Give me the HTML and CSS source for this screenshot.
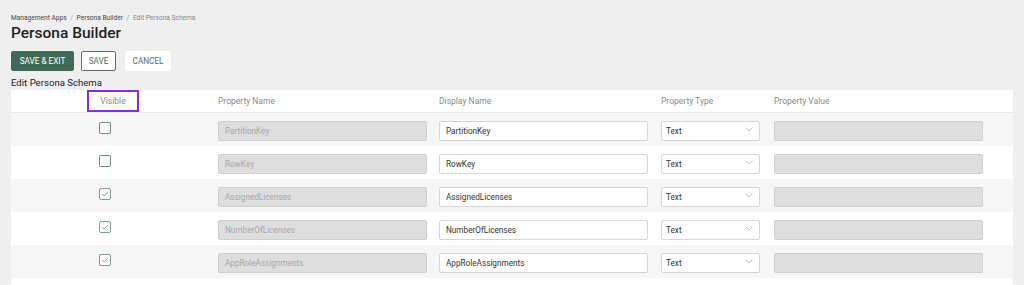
FILE: index.html
```html
<!DOCTYPE html>
<html lang="en">
<head>
    <meta charset="UTF-8">
    <meta name="viewport" content="width=device-width, initial-scale=1.0">
    <title>Persona Builder</title>
    <link rel="stylesheet" href="styles.css">
</head>
<body>
    <div class="page">
        <nav class="breadcrumb">
            <a href="#">Management Apps</a>
            <span class="sep">/</span>
            <a href="#">Persona Builder</a>
            <span class="sep">/</span>
            <span class="current">Edit Persona Schema</span>
        </nav>

        <h1>Persona Builder</h1>

        <div class="actions">
            <button class="btn btn-primary">Save &amp; Exit</button>
            <button class="btn btn-outline">Save</button>
            <button class="btn btn-plain">Cancel</button>
        </div>

        <h2 class="section-title">Edit Persona Schema</h2>

        <div class="schema-table">
            <!-- Header -->
            <div class="schema-row schema-head">
                <div class="cell cell-visible"><span class="visible-label">Visible</span></div>
                <div class="cell">Property Name</div>
                <div class="cell">Display Name</div>
                <div class="cell">Property Type</div>
                <div class="cell">Property Value</div>
            </div>

            <div class="schema-row">
                <div class="cell cell-visible"><span class="checkbox"></span></div>
                <div class="cell"><input class="field" type="text" value="PartitionKey" disabled></div>
                <div class="cell"><input class="field" type="text" value="PartitionKey"></div>
                <div class="cell">
                    <div class="select-wrap">
                        <select class="field select"><option>Text</option></select>
                        <svg class="chevron" width="8" height="5" viewBox="0 0 8 5"><path d="M0.5 0.5 L4 4 L7.5 0.5" fill="none" stroke="#c4c4c4" stroke-width="1"/></svg>
                    </div>
                </div>
                <div class="cell"><input class="field" type="text" value="" disabled></div>
            </div>

            <div class="schema-row">
                <div class="cell cell-visible"><span class="checkbox"></span></div>
                <div class="cell"><input class="field" type="text" value="RowKey" disabled></div>
                <div class="cell"><input class="field" type="text" value="RowKey"></div>
                <div class="cell">
                    <div class="select-wrap">
                        <select class="field select"><option>Text</option></select>
                        <svg class="chevron" width="8" height="5" viewBox="0 0 8 5"><path d="M0.5 0.5 L4 4 L7.5 0.5" fill="none" stroke="#c4c4c4" stroke-width="1"/></svg>
                    </div>
                </div>
                <div class="cell"><input class="field" type="text" value="" disabled></div>
            </div>

            <div class="schema-row">
                <div class="cell cell-visible">
                    <span class="checkbox checked"><svg width="8" height="6" viewBox="0 0 8 6"><path d="M1 3 L3 5 L7 1" fill="none" stroke="#86a899" stroke-width="1"/></svg></span>
                </div>
                <div class="cell"><input class="field" type="text" value="AssignedLicenses" disabled></div>
                <div class="cell"><input class="field" type="text" value="AssignedLicenses"></div>
                <div class="cell">
                    <div class="select-wrap">
                        <select class="field select"><option>Text</option></select>
                        <svg class="chevron" width="8" height="5" viewBox="0 0 8 5"><path d="M0.5 0.5 L4 4 L7.5 0.5" fill="none" stroke="#c4c4c4" stroke-width="1"/></svg>
                    </div>
                </div>
                <div class="cell"><input class="field" type="text" value="" disabled></div>
            </div>

            <div class="schema-row">
                <div class="cell cell-visible">
                    <span class="checkbox checked"><svg width="8" height="6" viewBox="0 0 8 6"><path d="M1 3 L3 5 L7 1" fill="none" stroke="#86a899" stroke-width="1"/></svg></span>
                </div>
                <div class="cell"><input class="field" type="text" value="NumberOfLicenses" disabled></div>
                <div class="cell"><input class="field" type="text" value="NumberOfLicenses"></div>
                <div class="cell">
                    <div class="select-wrap">
                        <select class="field select"><option>Text</option></select>
                        <svg class="chevron" width="8" height="5" viewBox="0 0 8 5"><path d="M0.5 0.5 L4 4 L7.5 0.5" fill="none" stroke="#c4c4c4" stroke-width="1"/></svg>
                    </div>
                </div>
                <div class="cell"><input class="field" type="text" value="" disabled></div>
            </div>

            <div class="schema-row">
                <div class="cell cell-visible">
                    <span class="checkbox checked"><svg width="8" height="6" viewBox="0 0 8 6"><path d="M1 3 L3 5 L7 1" fill="none" stroke="#86a899" stroke-width="1"/></svg></span>
                </div>
                <div class="cell"><input class="field" type="text" value="AppRoleAssignments" disabled></div>
                <div class="cell"><input class="field" type="text" value="AppRoleAssignments"></div>
                <div class="cell">
                    <div class="select-wrap">
                        <select class="field select"><option>Text</option></select>
                        <svg class="chevron" width="8" height="5" viewBox="0 0 8 5"><path d="M0.5 0.5 L4 4 L7.5 0.5" fill="none" stroke="#c4c4c4" stroke-width="1"/></svg>
                    </div>
                </div>
                <div class="cell"><input class="field" type="text" value="" disabled></div>
            </div>

            <div class="schema-row schema-empty"></div>
        </div>
    </div>
</body>
</html>
```

FILE: styles.css
```css
body {
    margin: 0;
    padding: 0;
    font-family: Roboto, "Liberation Sans", Arial, sans-serif;
    background-color: #efefef;
    color: #222;
}

.page {
    padding: 13px 11px 0 11px;
}

/* Breadcrumb */
.breadcrumb {
    font-size: 6.6px;
    line-height: 10px;
    color: #444;
}

.breadcrumb a {
    color: #444;
    text-decoration: none;
}

.breadcrumb .sep {
    color: #999;
    margin: 0 2px;
}

.breadcrumb .current {
    color: #888;
}

h1 {
    margin: 0;
    font-size: 15.5px;
    line-height: 20px;
    font-weight: 500;
    color: #222;
}

/* Buttons */
.actions {
    display: flex;
    gap: 7px;
    margin-top: 8px;
}

.btn {
    height: 20px;
    padding: 0;
    font-family: inherit;
    font-size: 8.2px;
    text-transform: uppercase;
    white-space: nowrap;
    border-radius: 2px;
    cursor: pointer;
}

.btn-primary {
    width: 63px;
    background-color: #3e6a57;
    color: #fff;
    border: 1px solid #3e6a57;
}

.btn-outline {
    width: 35px;
    background-color: #fff;
    color: #5a6a64;
    border: 1px solid #4d7665;
}

.btn-plain {
    width: 46px;
    margin-left: 2px;
    background-color: #fff;
    color: #5a6a64;
    border: 1px solid #fff;
}

.section-title {
    margin: 6px 0 1px 0;
    font-size: 9.6px;
    line-height: 12px;
    font-weight: 400;
    color: #222;
}

/* Schema table */
.schema-table {
    background-color: #fff;
    width: 1002px;
}

.schema-row {
    display: grid;
    grid-template-columns: 207px 221px 222px 113px 239px;
    align-items: center;
    height: 33px;
}

.schema-row:nth-child(even) {
    background-color: #f6f6f6;
}

.schema-head {
    height: 22px;
    border-bottom: 1px solid #e8e8e8;
    font-size: 8.5px;
    color: #8a8a8a;
}

.schema-head .cell {
    line-height: 22px;
}

.cell-visible {
    padding-left: 88px;
    display: flex;
    align-items: center;
}

.schema-head .cell-visible {
    padding-left: 76px;
}

.visible-label {
    display: inline-block;
    box-sizing: border-box;
    width: 52px;
    height: 22px;
    line-height: 18px;
    text-align: center;
    border: 2px solid #8a2be2;
    color: #8a8a8a;
}

.schema-empty {
    height: 7px;
    background-color: #fff !important;
}

/* Fields */
.field {
    box-sizing: border-box;
    height: 20px;
    width: 209px;
    padding: 0 6px;
    font-family: inherit;
    font-size: 8.2px;
    color: #333;
    background-color: #fff;
    border: 1px solid #d6d6d6;
    border-radius: 2px;
    outline: none;
}

.field:disabled {
    background-color: #dedede;
    border-color: #cfcfcf;
    color: #a8a8a8;
}

.select-wrap {
    position: relative;
    width: 99px;
}

.select {
    width: 99px;
    padding: 0 4px;
    -webkit-appearance: none;
    appearance: none;
}

.chevron {
    position: absolute;
    right: 7px;
    top: 8px;
}

.checkbox {
    box-sizing: border-box;
    display: inline-flex;
    align-items: center;
    justify-content: center;
    width: 12px;
    height: 12px;
    border: 1px solid #6b8a7c;
    border-radius: 2px;
    background-color: #fff;
    margin-top: -3px;
}

.checkbox.checked {
    border-color: #7f9d90;
}
```
